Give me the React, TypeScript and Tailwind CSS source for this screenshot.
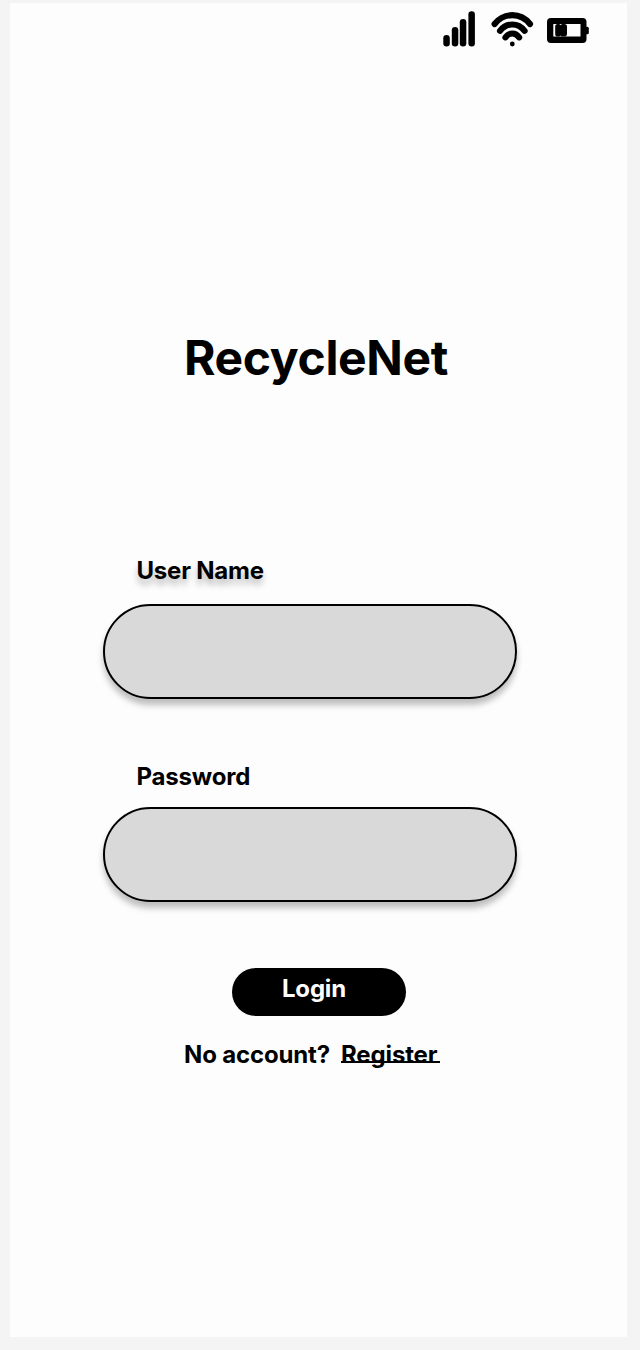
import { FormEvent, useState } from "react";

function SignalIcon() {
  return (
    <svg width="32" height="36" viewBox="0 0 32 36" className="shrink-0">
      <rect x="0.3" y="24" width="6.5" height="11.4" rx="3.2" />
      <rect x="8.8" y="16" width="6.5" height="19.4" rx="3.2" />
      <rect x="16.8" y="8" width="6.5" height="27.4" rx="3.2" />
      <rect x="25.4" y="0.2" width="6.5" height="35.2" rx="3.2" />
    </svg>
  );
}

function WifiIcon() {
  return (
    <svg
      width="44"
      height="36"
      viewBox="0 0 44 36"
      fill="none"
      stroke="black"
      strokeWidth="6.1"
      strokeLinecap="round"
      className="ml-[15px] shrink-0"
    >
      <path d="M4.6 13C14 1.2 30.6 1.2 40 13" />
      <path d="M10 19.8C16.5 11.4 28.1 11.4 34.6 19.8" />
      <path d="M15.4 26.4C19 21.2 25.6 21.2 29.2 26.4" />
      <circle cx="22.3" cy="33" r="2.4" fill="black" stroke="none" />
    </svg>
  );
}

function BatteryIcon() {
  return (
    <svg width="42" height="26" viewBox="0 0 42 26" className="mt-[7px] ml-[13px] shrink-0">
      <path
        fillRule="evenodd"
        d="M4 0H35.5A4 4 0 0 1 39.5 4V21A4 4 0 0 1 35.5 25H4A4 4 0 0 1 0 21V4A4 4 0 0 1 4 0ZM6.3 6V18.5H33.5V6Z"
      />
      <rect x="38" y="8.8" width="3.8" height="7.4" rx="1.5" />
      <rect x="8.2" y="6" width="5.8" height="12.6" rx="2.5" />
      <rect x="13.2" y="6" width="6.8" height="12.6" rx="2.8" />
    </svg>
  );
}

const inputClass =
  "block h-[95px] w-[414.5px] rounded-full border-2 border-black bg-[#d9d9d9] px-9 text-2xl shadow-[0_6px_6px_rgba(0,0,0,0.25)] outline-none";

export default function App() {
  const [userName, setUserName] = useState("");
  const [password, setPassword] = useState("");

  const submit = (event: FormEvent<HTMLFormElement>) => {
    event.preventDefault();
  };

  return (
    <div className="h-[1350px] w-[640px] overflow-hidden bg-[#f4f4f4] pt-[3px] pl-[10px] font-['Inter',sans-serif] text-black">
      <main className="flex h-[1334px] w-[617px] flex-col bg-[#fdfdfd]">
        <header className="flex h-[50px] items-start pt-2 pl-[433px]">
          <SignalIcon />
          <WifiIcon />
          <BatteryIcon />
        </header>

        <h1 className="mt-[276px] pl-[174px] text-[48px] leading-[58px] font-bold tracking-[-0.35px]">
          RecycleNet
        </h1>

        <form
          onSubmit={submit}
          className="mt-[170px] flex flex-col pl-[92.5px] text-2xl leading-7 font-bold tracking-[-0.2px]"
        >
          <label
            htmlFor="username"
            className="pl-[34px] [text-shadow:0_6px_6px_rgba(0,0,0,0.25)]"
          >
            User Name
          </label>
          <input
            id="username"
            type="text"
            value={userName}
            onChange={(event) => setUserName(event.target.value)}
            className={`mt-[19px] ${inputClass}`}
          />

          <label htmlFor="password" className="mt-16 pl-[34px]">
            Password
          </label>
          <input
            id="password"
            type="password"
            value={password}
            onChange={(event) => setPassword(event.target.value)}
            className={`mt-[15.5px] ${inputClass}`}
          />

          <button
            type="submit"
            className="mt-[66.5px] ml-[129px] flex h-[47.5px] w-[174px] rounded-full bg-black pt-[7px] pl-[50.5px] text-white"
          >
            Login
          </button>
        </form>

        <p className="mt-[25.5px] flex pl-[174px] text-2xl leading-7 font-bold tracking-[-0.15px]">
          No account?
          <a href="#register" className="ml-[11px] flex h-[22px] w-[99px] border-b-2 border-black">
            Register
          </a>
        </p>
      </main>
    </div>
  );
}
